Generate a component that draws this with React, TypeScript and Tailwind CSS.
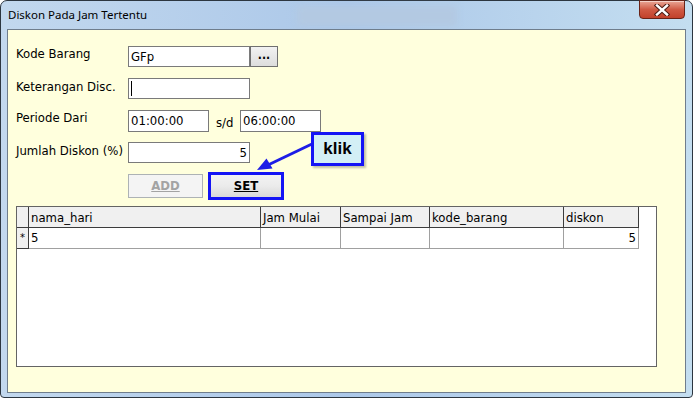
const ui = { fontFamily: 'Tahoma, "DejaVu Sans Condensed", "DejaVu Sans", sans-serif' };

const columns = [
  { name: "nama_hari", width: 232, value: "5", right: false },
  { name: "Jam Mulai", width: 80, value: "", right: false },
  { name: "Sampai Jam", width: 89, value: "", right: false },
  { name: "kode_barang", width: 134, value: "", right: false },
  { name: "diskon", width: 75, value: "5", right: true },
];

function TextBox({ width, value, right, cursor }: { width: number; value?: string; right?: boolean; cursor?: boolean }) {
  return (
    <div
      className={`flex h-full items-center border border-[#7a7a7a] bg-white px-[2px] text-black ${right ? "justify-end" : ""}`}
      style={{ width }}
    >
      {cursor ? <span className="h-[15px] w-px bg-black" /> : value}
    </div>
  );
}

function CloseButton() {
  return (
    <div className="absolute right-[7px] top-[-1px] flex h-[19px] w-[46px] items-center justify-center rounded-b-[4px] border border-[#6a2418] bg-gradient-to-b from-[#e9a696] via-[#d05a44] to-[#c2412b] shadow-[inset_0_1px_0_rgba(255,255,255,0.5)]">
      <svg width="16" height="12" viewBox="0 0 16 12">
        <path d="M3 1.5 L13 10.5 M13 1.5 L3 10.5" stroke="#4a1a12" strokeWidth="4.4" strokeLinecap="square" />
        <path d="M3 1.5 L13 10.5 M13 1.5 L3 10.5" stroke="#ffffff" strokeWidth="2.4" strokeLinecap="square" />
      </svg>
    </div>
  );
}

export default function App() {
  return (
    <div className="h-[398px] w-[693px] overflow-hidden bg-white">
      <div className="relative flex h-[398px] w-[693px] flex-col rounded-t-[7px] rounded-b-[4px] border border-[#2c3640] bg-gradient-to-r from-[#c2d8ee] via-[#acc8e9] to-[#c4def0]">
        {/* title bar */}
        <div className="flex h-[28px] items-center pl-[7px]">
          <span className="text-[11.5px] text-black" style={{ fontFamily: '"Noto Sans", "Open Sans", sans-serif' }}>
            Diskon Pada Jam Tertentu
          </span>
          <div className="ml-[150px] mt-[2px] h-[20px] w-[160px] rounded-[3px] bg-[#b3c9e2] blur-[3px]" />
        </div>
        <CloseButton />

        {/* client area */}
        <div
          className="relative mx-[6px] h-[364px] border border-[#6f7d8c] bg-[#ffffdd] text-[13px] text-black"
          style={ui}
        >
          <div className="flex flex-col pl-[8px] pt-[16px]">
            <div className="flex h-[21px] items-start">
              <span className="w-[112px] leading-[15px]">Kode Barang</span>
              <TextBox width={122} value="GFp" />
              <div className="flex h-full w-[28px] items-center justify-center border border-[#707070] bg-gradient-to-b from-[#f2f2f2] to-[#dddddd] pb-[4px] text-[12px] font-bold">
                ...
              </div>
            </div>
            <div className="mt-[11px] flex h-[21px] items-start">
              <span className="w-[112px] pt-[1px] leading-[15px]">Keterangan Disc.</span>
              <TextBox width={122} cursor />
            </div>
            <div className="mt-[11px] flex h-[22px] items-start">
              <span className="w-[112px] leading-[15px]">Periode Dari</span>
              <TextBox width={81} value="01:00:00" />
              <span className="ml-[7px] w-[24px] pt-[5px] leading-[15px]">s/d</span>
              <TextBox width={81} value="06:00:00" />
            </div>
            <div className="mt-[10px] flex h-[21px] items-start">
              <span className="w-[112px] pt-[1px] leading-[15px]">Jumlah Diskon (%)</span>
              <TextBox width={122} value="5" right />
            </div>
            <div className="mt-[9px] flex h-[28px] items-center pl-[112px]">
              <div className="flex h-[24px] w-[75px] items-center justify-center border border-[#adb2b5] bg-[#f4f4f4] font-bold text-[#a3a3a3] underline">
                ADD
              </div>
              <div className="ml-[5px] flex h-[28px] w-[76px] border-[3px] border-[#1414f5] bg-[#1414f5]">
                <div className="flex flex-1 items-center justify-center bg-gradient-to-b from-[#f3f3f3] via-[#ebebeb] to-[#d9d9d9] font-bold underline">
                  SET
                </div>
              </div>
            </div>

            {/* grid */}
            <div className="mt-[6px] h-[161px] w-[641px] border border-[#646464] bg-white">
              <div className="flex h-[21px]">
                <div className="w-[12px] border-r border-b border-[#3c3c3c] bg-[#f0f0f0]" />
                {columns.map((c) => (
                  <div
                    key={c.name}
                    className="flex items-center border-r border-b border-[#3c3c3c] bg-[#f0f0f0] pl-[2px] leading-[15px]"
                    style={{ width: c.width }}
                  >
                    {c.name}
                  </div>
                ))}
              </div>
              <div className="flex h-[21px]">
                <div className="flex w-[12px] items-center justify-center border-r border-b border-[#3c3c3c] bg-[#f0f0f0] text-[11px]">
                  *
                </div>
                {columns.map((c) => (
                  <div
                    key={c.name}
                    className={`flex items-center border-r border-b border-[#a0a0a0] px-[2px] ${c.right ? "justify-end" : ""}`}
                    style={{ width: c.width }}
                  >
                    {c.value}
                  </div>
                ))}
              </div>
            </div>
          </div>

          {/* callout */}
          <svg className="absolute left-[240px] top-[105px]" width="80" height="45" viewBox="0 0 80 45">
            <line x1="66" y1="8" x2="20" y2="30" stroke="#1d1de6" strokeWidth="3" />
            <polygon points="9,35 18.5,23.5 24.5,33.5" fill="#1d1de6" />
          </svg>
          <div className="absolute left-[303px] top-[102px] flex h-[34px] w-[53px] items-center justify-center border-[3px] border-[#1414f5] bg-[#d3eff5] shadow-[2px_2px_2px_rgba(0,0,0,0.25)]">
            <span className="text-[17px] font-bold" style={{ fontFamily: '"Liberation Sans", Arial, sans-serif' }}>
              klik
            </span>
          </div>
        </div>
      </div>
    </div>
  );
}
